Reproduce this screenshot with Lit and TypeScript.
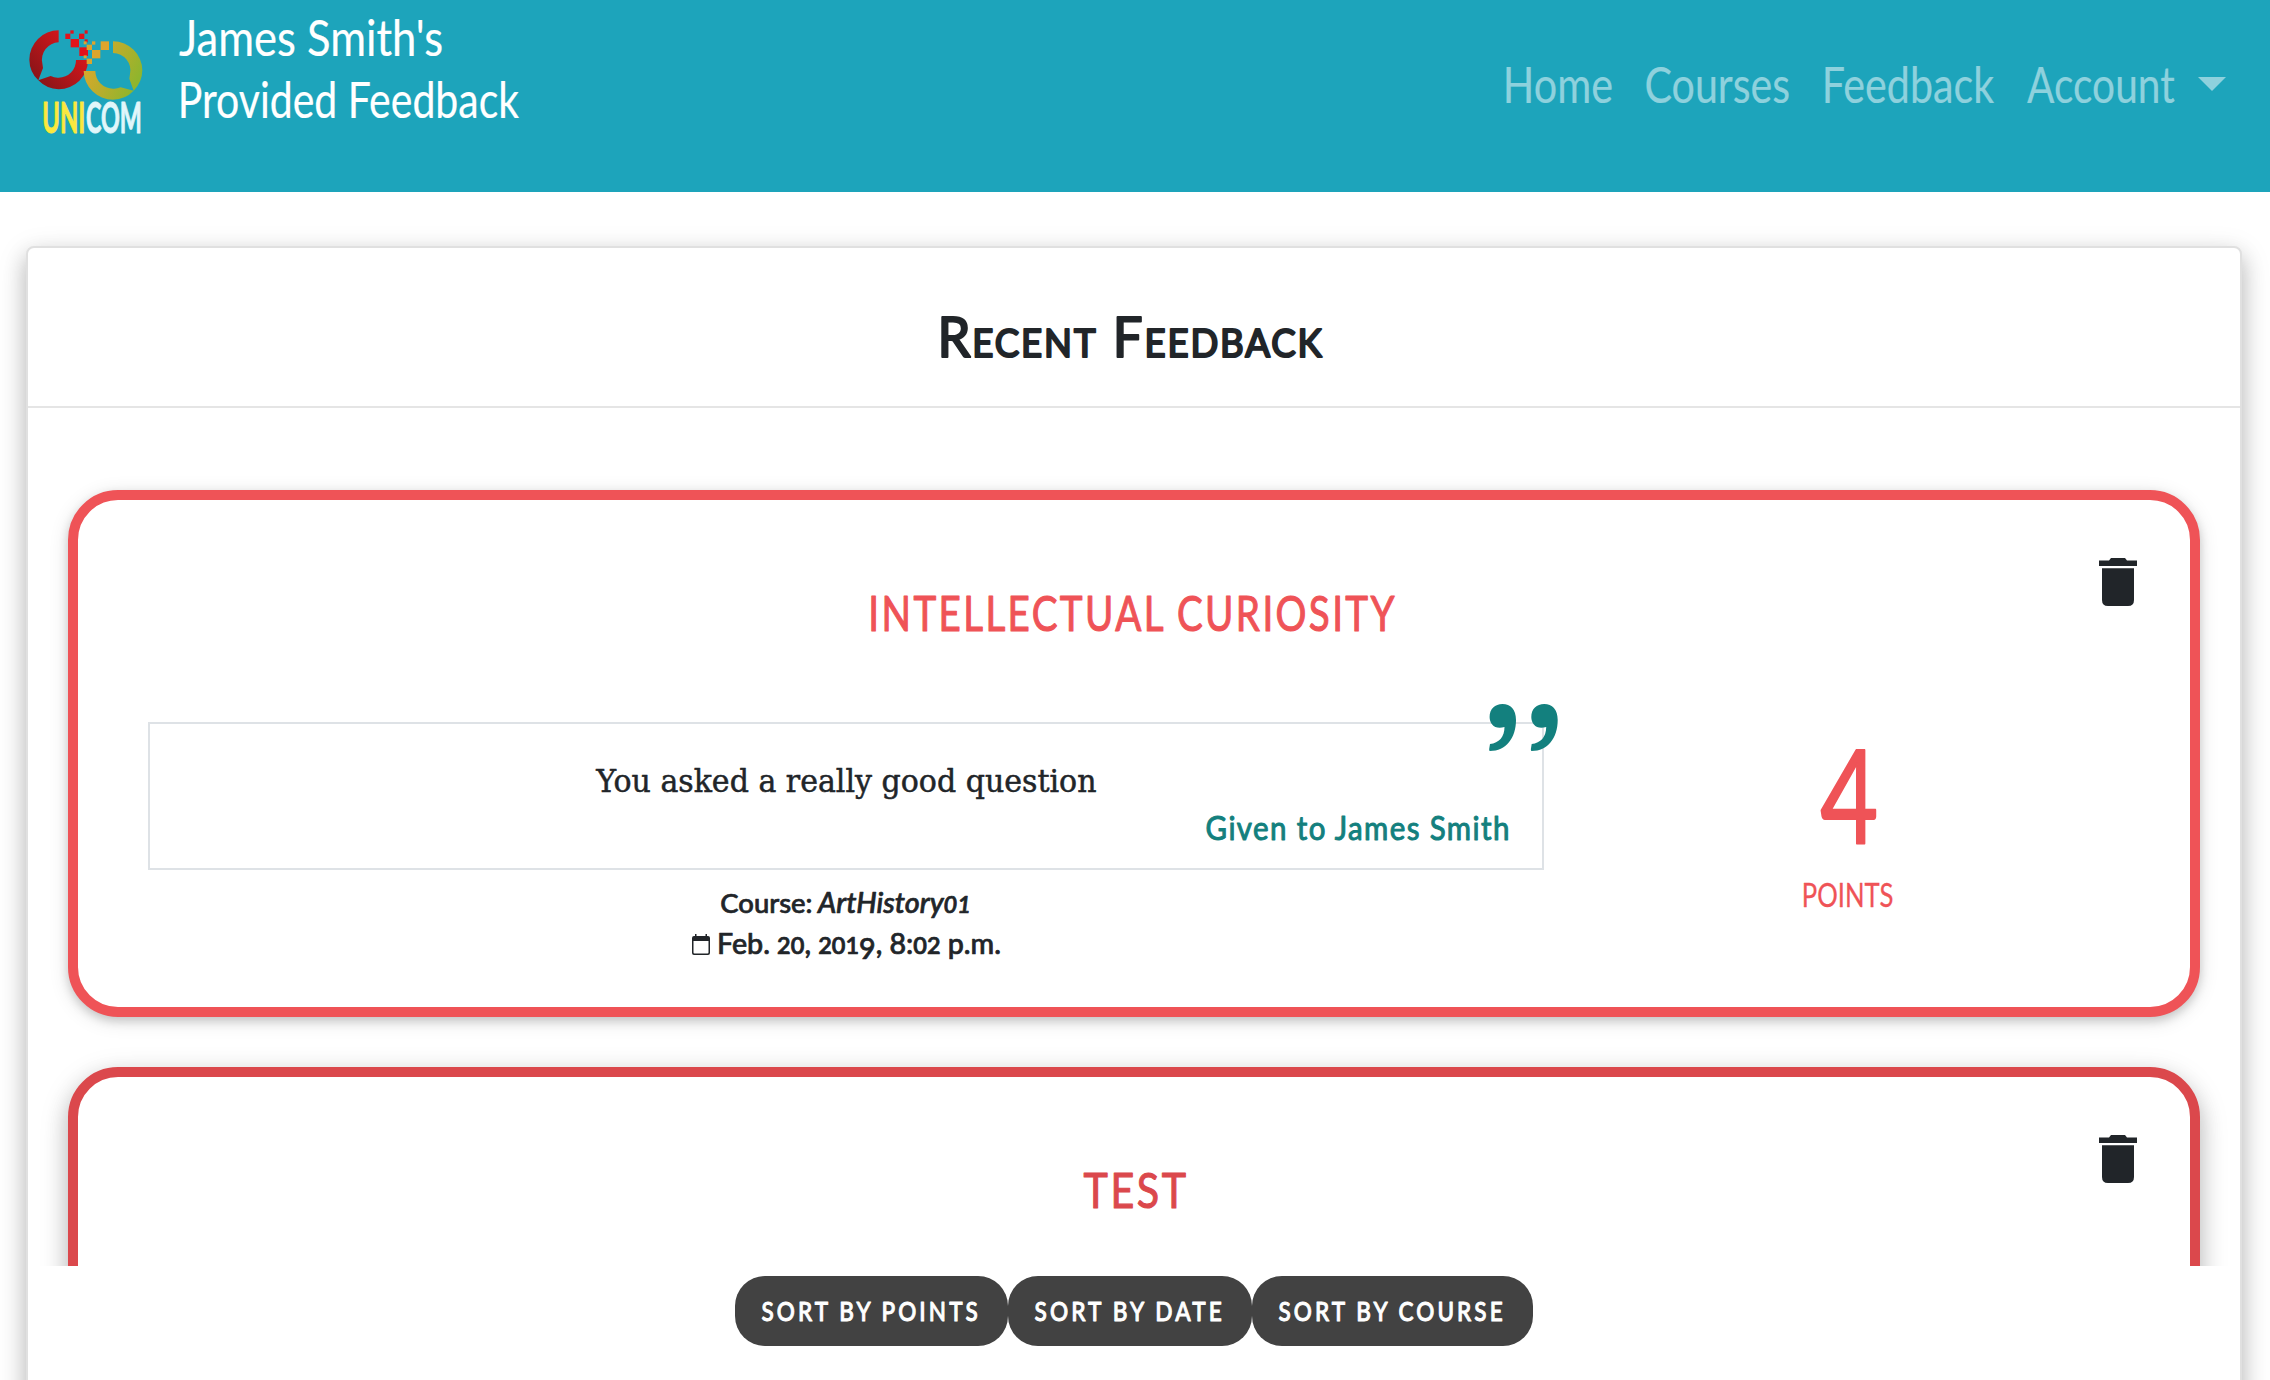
import { LitElement, html, svg, css, nothing } from "lit";
import { customElement, property } from "lit/decorators.js";

interface LabelOptions {
  width: number;
  cap: number;
  weight?: number;
  family?: string;
  capRatio?: number;
  spacing?: number;
  bold?: number;
  smallCaps?: boolean;
}

const ctx = document.createElement("canvas").getContext("2d")! as any;

/** One line of text whose ink, with its rounding outline, fills a box of the given width and cap height. */
function label(text: string, o: LabelOptions) {
  const family = o.family ?? "Lato";
  const weight = o.weight ?? 400;
  const bold = o.bold ?? 0;
  const size = (o.cap - bold) / (o.capRatio ?? 0.72);
  ctx.font = `${weight} ${size}px "${family}", sans-serif`;
  ctx.letterSpacing = `${o.spacing ?? 0}px`;
  ctx.fontVariantCaps = o.smallCaps ? "small-caps" : "normal";
  const m = ctx.measureText(text);
  const ink = m.actualBoundingBoxLeft + m.actualBoundingBoxRight;
  const scale = (o.width - bold) / ink;
  return html`<svg class="label" width=${o.width} height=${o.cap}>
    <text
      transform="translate(${bold / 2} ${o.cap - bold / 2}) scale(${scale} 1)"
      x=${m.actualBoundingBoxLeft}
      y="0"
      font-family="${family}, sans-serif"
      font-size=${size}
      font-weight=${weight}
      font-variant=${o.smallCaps ? "small-caps" : "normal"}
      letter-spacing=${o.spacing ?? 0}
      stroke-width=${bold}
    >${text}</text>
  </svg>`;
}

/** Text set with old-style figures: 0-2 at x-height, 3-5, 7 and 9 below the baseline. */
function oldStyle(text: string, width: number, italic = false) {
  let shift = 0;
  const runs = [...text].map((ch) => {
    const want = /[34579]/.test(ch) ? 5 : 0;
    const dy = want - shift;
    shift = want;
    const small = /[012]/.test(ch);
    return svg`<tspan dy=${dy} font-size=${small ? 23 : 28} font-weight=${small ? 600 : 500}>${ch}</tspan>`;
  });
  const bearing = italic ? 0 : 2;
  return html`<svg class="label" width=${width} height="20">
    <text x=${-bearing} y="20" font-family="Lato, sans-serif" font-style=${italic ? "italic" : "normal"}
      stroke-width="0.7" textLength=${width + bearing} lengthAdjust="spacingAndGlyphs">${runs}</text>
  </svg>`;
}

const labelStyles = css`
  .label {
    display: block;
    flex: none;
    overflow: visible;
    fill: currentColor;
    stroke: currentColor;
    stroke-linejoin: round;
  }
  .label text {
    white-space: pre;
  }
`;

const redSquares = [
  [136, 41, 15, 16], [151, 31, 10, 10], [152, 57, 25, 25], [177, 41, 16, 16],
  [194, 31, 9, 10], [194, 58, 9, 9], [178, 82, 26, 26],
];
const goldSquares = [
  [191, 64, 9, 9], [216, 64, 10, 10], [200, 74, 16, 16], [242, 64, 25, 26],
  [216, 90, 25, 25], [191, 106, 9, 9], [200, 116, 16, 16],
];

@customElement("unicom-logo")
export class UnicomLogo extends LitElement {
  static styles = [
    labelStyles,
    css`
      :host { display: block; width: 114px; height: 104px; }
      .mark { display: block; width: 114px; height: 71px; overflow: visible; }
      .name { display: flex; gap: 2px; padding: 1px 0 0 14px; }
      .uni { color: #fbe83e; }
      .com { color: #e1f6fa; }
    `,
  ];
  render() {
    const square = (fill: string) => ([x, y, w, h]: number[]) =>
      svg`<rect x=${x} y=${y} width=${w} height=${h} fill=${fill}></rect>`;
    return html`
      <svg class="mark" viewBox="27 30 342 213">
        <defs>
          <linearGradient id="r" x1="0.85" y1="0.2" x2="0.15" y2="0.85">
            <stop offset="0" stop-color="#dc161c"></stop>
            <stop offset="1" stop-color="#8b1518"></stop>
          </linearGradient>
          <linearGradient id="g" x1="0.05" y1="0.3" x2="0.9" y2="0.7">
            <stop offset="0" stop-color="#dca72b"></stop>
            <stop offset="1" stop-color="#8fb52d"></stop>
          </linearGradient>
        </defs>
        <path fill="url(#r)"
          d="M116 31V67A52 52 0 0 0 67 130L69 144L55 181L92 168Q104 174 116 173A52 52 0 0 0 168 120H204A88 88 0 0 1 116 208A88 88 0 0 1 55 181A88 88 0 0 1 28 119A88 88 0 0 1 116 31Z"></path>
        <path fill="url(#g)"
          d="M279 64V99A52 52 0 0 1 330 162L328 176L341 212L302 202Q290 207 279 206A53 53 0 0 1 226 153H191A88 88 0 0 0 279 239A88 88 0 0 0 341 212A88 88 0 0 0 367 151A88 88 0 0 0 279 64Z"></path>
        ${redSquares.map(square("#e2131b"))}${goldSquares.map(square("#dda52c"))}
      </svg>
      <div class="name">
        <span class="uni">${label("UNI", { width: 41, cap: 31, weight: 700, bold: 1 })}</span>
        <span class="com">${label("COM", { width: 55, cap: 31, weight: 700, bold: 1 })}</span>
      </div>
    `;
  }
}

@customElement("feedback-item")
export class FeedbackItem extends LitElement {
  @property({ attribute: false }) item!: Feedback;

  static styles = [
    labelStyles,
    css`
      :host { display: block; }
      .box {
        box-sizing: border-box;
        height: 527px;
        border: 10px solid #ef5357;
        border-radius: 50px;
        background: #fff;
        color: #ef5357;
        box-shadow: 0 4px 10px rgba(0, 0, 0, 0.16), 0 4px 20px rgba(0, 0, 0, 0.12);
      }
      .box.dark {
        border-color: #db484c;
        color: #db484c;
        box-shadow: 0 10px 22px rgba(0, 0, 0, 0.18), 0 8px 30px rgba(0, 0, 0, 0.15);
      }
      .top {
        display: grid;
        grid-template-columns: 1fr auto 1fr;
        padding: 58px 53px 0;
      }
      .title { grid-column: 2; padding-top: 38px; }
      .trash { justify-self: end; width: 38px; height: 48px; fill: #212529; }
      .main { display: flex; padding: 90px 38px 0 70px; }
      .left { width: 1396px; color: #212529; }
      .quote {
        position: relative;
        box-sizing: border-box;
        height: 148px;
        padding: 45px 33px 0;
        border: 2px solid #dee2e6;
        display: flex;
        flex-direction: column;
        align-items: center;
        gap: 24px;
      }
      .to { align-self: flex-end; color: #13807e; }
      .marks {
        position: absolute;
        top: -20px;
        right: -16px;
        width: 69px;
        height: 47px;
        fill: #13807e;
      }
      .meta {
        display: flex;
        flex-direction: column;
        align-items: center;
        gap: 20px;
        padding-top: 23px;
      }
      .line { display: flex; gap: 6px; }
      .line.date { gap: 9px; }
      .cal { width: 18px; height: 21px; fill: #212529; }
      .score {
        flex: 1;
        display: flex;
        flex-direction: column;
        align-items: center;
        gap: 38px;
        padding-top: 28px;
      }
    `,
  ];

  render() {
    const f = this.item;
    return html`<div class="box ${f.dark ? "dark" : ""}">
      <div class="top">
        <div class="title">${label(f.title, { width: f.titleWidth, cap: 36, bold: 1.1, spacing: 3 })}</div>
        <svg class="trash" viewBox="0 0 38 48">
          <path d="M0 2.5H10L12 0H26L28 2.5H38V8H0ZM3 10.300H35V42Q35 48 29 48H9Q3 48 3 42Z"></path>
        </svg>
      </div>
      ${f.quote
        ? html`<div class="main">
            <div class="left">
              <div class="quote">
                ${label(f.quote, { width: 502, cap: 23, family: "DejaVu Serif", capRatio: 0.729, bold: 0.5 })}
                <div class="to">${label(f.to!, { width: 303, cap: 24, spacing: 1.5, bold: 1 })}</div>
                <svg class="marks" viewBox="0 0 69 47">
                  <path id="m" d="M13.500 0C21.500 0 27 5.500 27 16C27 34 17 47 1 47C0 47 0 45.500 0.500 43L1 40C10 39 15.500 33 15.500 23C6 26 0.600 20 0.600 13C0.600 5 6 0 13.500 0Z"></path>
                  <use href="#m" x="41.700"></use>
                </svg>
              </div>
              <div class="meta">
                <div class="line">
                  ${label("Course:", { width: 91, cap: 20.5, weight: 500, bold: 0.7 })}
                  ${oldStyle(f.course!, 153, true)}
                </div>
                <div class="line date">
                  <svg class="cal" viewBox="0 0 18 21">
                    <path fill-rule="evenodd" d="M3 0H4.500V2H13.500V0H15V2H16Q18 2 18 4V19Q18 21 16 21H2Q0 21 0 19V4Q0 2 2 2H3ZM1.500 7V18.500Q1.500 19.500 2.500 19.500H15.500Q16.500 19.500 16.500 18.500V7Z"></path>
                  </svg>
                  ${oldStyle(f.date!, 282)}
                </div>
              </div>
            </div>
            <div class="score">
              ${label(f.points!, { width: 57, cap: 95, weight: 400, bold: 2 })}
              ${label("POINTS", { width: 89, cap: 24, bold: 0.3 })}
            </div>
          </div>`
        : nothing}
    </div>`;
  }
}

interface Feedback {
  title: string;
  titleWidth: number;
  dark?: boolean;
  quote?: string;
  to?: string;
  course?: string;
  date?: string;
  points?: string;
}

const items: Feedback[] = [
  {
    title: "INTELLECTUAL CURIOSITY",
    titleWidth: 526,
    quote: "You asked a really good question",
    to: "Given to James Smith",
    course: "ArtHistory01",
    date: "Feb. 20, 2019, 8:02 p.m.",
    points: "4",
  },
  { title: "TEST", titleWidth: 103, dark: true },
];

const links = [
  { text: "Home", width: 106 },
  { text: "Courses", width: 143 },
  { text: "Feedback", width: 169 },
  { text: "Account", width: 148 },
];

const sorts = [
  { text: "SORT BY POINTS", width: 218 },
  { text: "SORT BY DATE", width: 189 },
  { text: "SORT BY COURSE", width: 226 },
];

@customElement("app-root")
export class AppRoot extends LitElement {
  static styles = [
    labelStyles,
    css`
      :host {
        display: block;
        position: relative;
        height: 1380px;
        overflow: hidden;
        background: #fff;
        font-family: Lato, sans-serif;
      }
      .header {
        box-sizing: border-box;
        display: flex;
        align-items: flex-start;
        height: 192px;
        padding: 0 44px 0 29px;
        background: #1da4bb;
        color: #fff;
      }
      .logo { padding-top: 30px; }
      .heading {
        display: flex;
        flex-direction: column;
        gap: 26px;
        padding: 20px 0 0 36px;
      }
      .second { padding-left: 2px; }
      .nav {
        display: flex;
        gap: 33px;
        margin-left: auto;
        padding-top: 67px;
        color: #8ed1dd;
      }
      .link:nth-child(2) { padding-left: 1px; }
      .link:nth-child(3) { padding-left: 3px; }
      .account { display: flex; gap: 23px; }
      .caret { width: 28px; height: 14px; margin-top: 10px; fill: currentColor; }
      .card {
        box-sizing: border-box;
        height: 1400px;
        margin: 54px 28px 0 26px;
        border: 2px solid #e0e0e0;
        border-radius: 8px;
        background: #fff;
        box-shadow: 0 10px 22px rgba(0, 0, 0, 0.18), 0 8px 30px rgba(0, 0, 0, 0.15);
      }
      .card-title {
        display: flex;
        justify-content: center;
        height: 91px;
        padding: 67px 0 0;
        border-bottom: 2px solid #e5e5e5;
        color: #212529;
      }
      .list {
        display: flex;
        flex-direction: column;
        gap: 50px;
        padding: 82px 40px 0;
      }
      .bar {
        position: absolute;
        left: 28px;
        right: 30px;
        bottom: 0;
        height: 104px;
        padding-top: 10px;
        display: flex;
        justify-content: center;
        align-items: flex-start;
        background: #fff;
      }
      .sort {
        display: block;
        height: 70px;
        margin: 0;
        padding: 0 29px 2px 26px;
        border: 0;
        border-radius: 30px;
        background: #424242;
        color: #fff;
      }
    `,
  ];

  render() {
    const name = (text: string, width: number) => label(text, { width, cap: 36, bold: 0.2 });
    return html`
      <header class="header">
        <unicom-logo class="logo"></unicom-logo>
        <div class="heading">
          <div>${name("James Smith's", 263)}</div>
          <div class="second">${name("Provided Feedback", 338)}</div>
        </div>
        <nav class="nav">
          ${links.map((l) =>
            l.text === "Account"
              ? html`<div class="link account">
                  ${name(l.text, l.width)}
                  <svg class="caret" viewBox="0 0 28 14"><path d="M0 0H28L14 14Z"></path></svg>
                </div>`
              : html`<div class="link">${name(l.text, l.width)}</div>`
          )}
        </nav>
      </header>
      <section class="card">
        <div class="card-title">
          ${label("Recent Feedback", { width: 387, cap: 43, weight: 400, smallCaps: true, bold: 2.2, spacing: 2 })}
        </div>
        <div class="list">${items.map((i) => html`<feedback-item .item=${i}></feedback-item>`)}</div>
      </section>
      <footer class="bar">
        ${sorts.map(
          (s) => html`<button class="sort">
            ${label(s.text, { width: s.width, cap: 21, weight: 500, spacing: 3.8, bold: 1 })}
          </button>`
        )}
      </footer>
    `;
  }
}
